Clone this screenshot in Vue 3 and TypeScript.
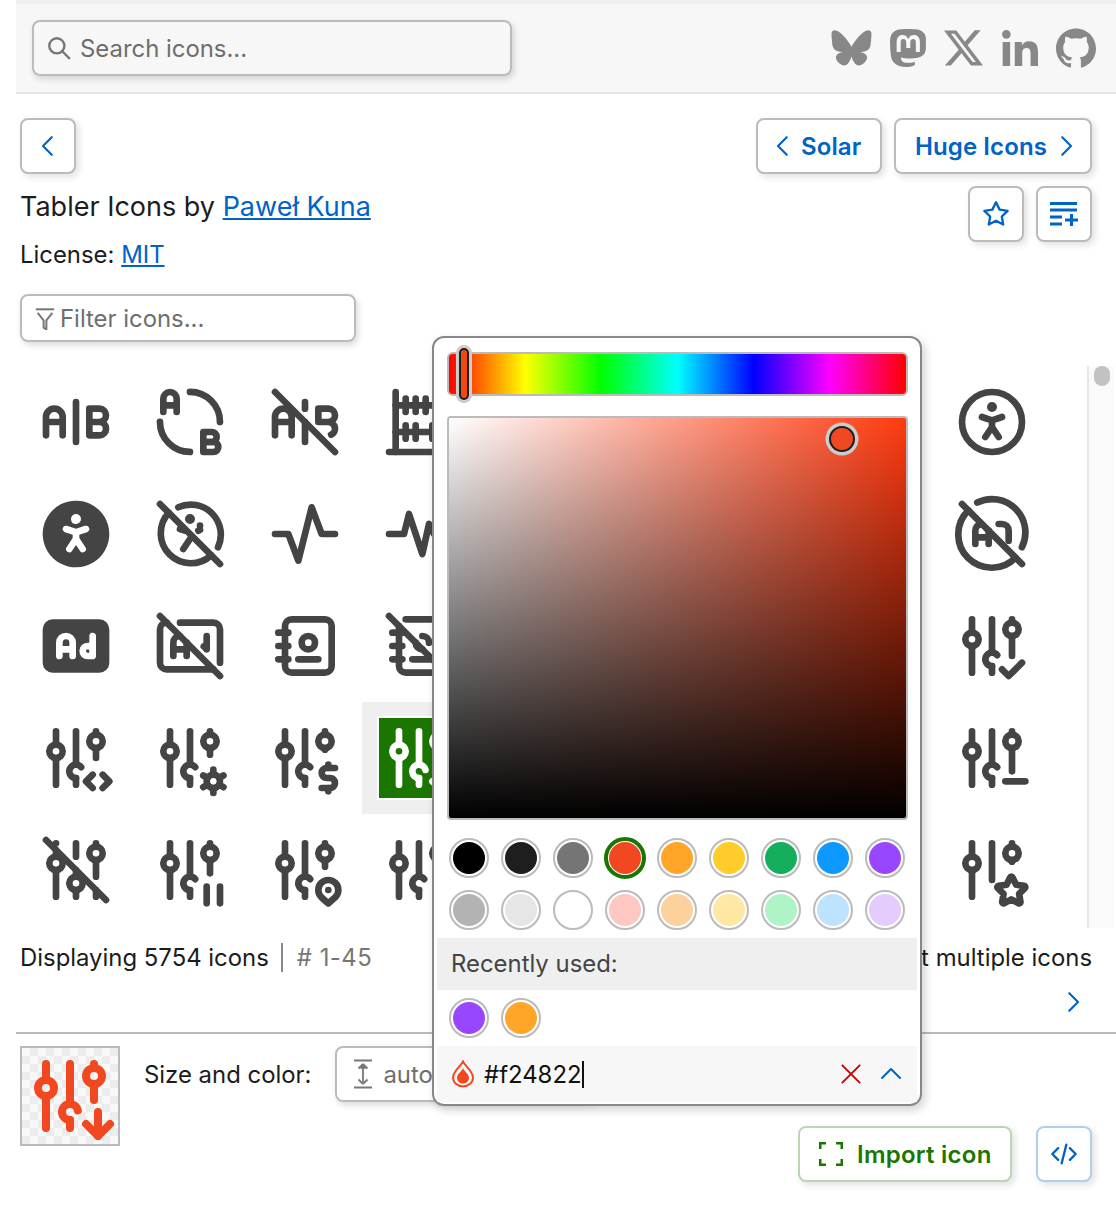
<template>
  <div class="page">
    <div class="top-strip"></div>
    <header class="header">
      <div class="search">
        <svg class="search-icon" viewBox="0 0 24 24"><circle cx="10" cy="10" r="7" /><path d="M15 15l7 7" /></svg>
        <span>Search icons...</span>
      </div>
      <div class="social">
        <svg class="s-bluesky" viewBox="2 2 20 19"><path d="M6.335 3.836C8.625 5.556 11.088 9.043 12 10.87c.912-1.827 3.375-5.314 5.665-7.034 1.652-1.24 4.335-2.2 4.335.854 0 .61-.35 5.12-.555 5.85-.714 2.54-3.314 3.188-5.626 2.796 4.041.688 5.069 2.966 2.849 5.245-4.217 4.327-6.06-1.086-6.533-2.473-.087-.254-.127-.373-.135-.272-.008-.101-.048.018-.135.272-.473 1.387-2.316 6.8-6.533 2.473-2.22-2.279-1.192-4.557 2.849-5.245-2.312.392-4.912-.256-5.626-2.796C2.35 9.81 2 5.3 2 4.69c0-3.054 2.683-2.094 4.335-.854z" /></svg>
        <svg class="s-mastodon" viewBox="0 0 24 24"><path d="M23.268 5.313c-.35-2.578-2.617-4.61-5.304-5.004C17.51.242 15.792 0 11.813 0h-.03c-3.98 0-4.835.242-5.288.309C3.882.692 1.496 2.518.917 5.127.64 6.412.61 7.837.661 9.143c.074 1.874.088 3.745.26 5.611.118 1.24.325 2.47.62 3.68.55 2.237 2.777 4.098 4.96 4.857 2.336.792 4.849.923 7.256.38.265-.061.527-.132.786-.213.585-.184 1.27-.39 1.774-.753a.057.057 0 0 0 .023-.043v-1.809a.052.052 0 0 0-.02-.041.053.053 0 0 0-.046-.01 20.282 20.282 0 0 1-4.709.545c-2.73 0-3.463-1.284-3.674-1.818a5.593 5.593 0 0 1-.319-1.433.053.053 0 0 1 .066-.054c1.517.363 3.072.546 4.632.546.376 0 .75 0 1.125-.01 1.57-.044 3.224-.124 4.768-.422.038-.008.077-.015.11-.024 2.435-.464 4.753-1.92 4.989-5.604.008-.145.03-1.52.03-1.67.002-.512.167-3.63-.024-5.545zm-3.748 9.195h-2.561V8.29c0-1.309-.55-1.976-1.67-1.976-1.23 0-1.846.79-1.846 2.35v3.403h-2.546V8.663c0-1.56-.617-2.35-1.848-2.35-1.112 0-1.668.668-1.67 1.977v6.218H4.822V8.102c0-1.31.337-2.35 1.011-3.12.696-.77 1.608-1.164 2.74-1.164 1.311 0 2.302.5 2.962 1.498l.638 1.06.638-1.06c.66-.999 1.65-1.498 2.96-1.498 1.13 0 2.043.395 2.74 1.164.675.77 1.012 1.81 1.012 3.12z" /></svg>
        <svg class="s-x" viewBox="0 1 24 22"><path d="M18.901 1.153h3.68l-8.04 9.19L24 22.846h-7.406l-5.8-7.584-6.638 7.584H.474l8.6-9.83L0 1.154h7.594l5.243 6.932ZM17.61 20.644h2.039L6.486 3.24H4.298Z" /></svg>
        <svg class="s-in" viewBox="3.2 3.3 17.3 17.2"><path d="M20.447 20.452h-3.554v-5.569c0-1.328-.027-3.037-1.852-3.037-1.853 0-2.136 1.445-2.136 2.939v5.667H9.351V9h3.414v1.561h.046c.477-.9 1.637-1.85 3.37-1.85 3.601 0 4.267 2.37 4.267 5.455v6.286zM5.337 7.433a2.062 2.062 0 0 1-2.063-2.065 2.064 2.064 0 1 1 2.063 2.065zm1.782 13.019H3.555V9h3.564v11.452z" /></svg>
        <svg class="s-github" viewBox="0 0 24 24"><path d="M12 .297c-6.63 0-12 5.373-12 12 0 5.303 3.438 9.8 8.205 11.385.6.113.82-.258.82-.577 0-.285-.01-1.04-.015-2.04-3.338.724-4.042-1.61-4.042-1.61C4.422 18.07 3.633 17.7 3.633 17.7c-1.087-.744.084-.729.084-.729 1.205.084 1.838 1.236 1.838 1.236 1.07 1.835 2.809 1.305 3.495.998.108-.776.417-1.305.76-1.605-2.665-.3-5.466-1.332-5.466-5.93 0-1.31.465-2.38 1.235-3.22-.135-.303-.54-1.523.105-3.176 0 0 1.005-.322 3.3 1.23.96-.267 1.98-.399 3-.405 1.02.006 2.04.138 3 .405 2.28-1.552 3.285-1.23 3.285-1.23.645 1.653.24 2.873.12 3.176.765.84 1.23 1.91 1.23 3.22 0 4.61-2.805 5.625-5.475 5.92.42.36.81 1.096.81 2.22 0 1.606-.015 2.896-.015 3.286 0 .315.21.69.825.57C20.565 22.092 24 17.592 24 12.297c0-6.627-5.373-12-12-12" /></svg>
      </div>
    </header>

    <main class="main">
      <div class="nav-row">
        <button class="btn square"><svg class="stroke-icon chev" viewBox="0 0 24 24"><path d="M15 5l-7 7l7 7" /></svg></button>
        <div class="nav-right">
          <button class="btn labeled solar"><svg class="stroke-icon chev" viewBox="0 0 24 24"><path d="M15 5l-7 7l7 7" /></svg>Solar</button>
          <button class="btn labeled huge">Huge Icons<svg class="stroke-icon chev" viewBox="0 0 24 24"><path d="M9 5l7 7l-7 7" /></svg></button>
        </div>
      </div>

      <div class="info-row">
        <div class="info">
          <h1 class="title">Tabler Icons by <a href="#">Paweł Kuna</a></h1>
          <p class="license">License: <a href="#">MIT</a></p>
        </div>
        <div class="info-actions">
          <button class="btn square"><svg class="stroke-icon star" viewBox="0 0 24 24"><path d="M12 17.75l-6.172 3.245l1.179 -6.873l-5 -4.867l6.9 -1l3.086 -6.253l3.086 6.253l6.9 1l-5 4.867l1.179 6.873z" /></svg></button>
          <button class="btn square"><svg class="stroke-icon list" viewBox="0 0 28 24"><path d="M0 1.500h27M0 8h27M0 15h12M0 22h12M15 18h13M21.500 12v12" /></svg></button>
        </div>
      </div>

      <div class="filter">
        <svg class="filter-icon" viewBox="0 0 24 24"><path d="M2 2.500h20" /><path d="M4 6.500l6.500 8v8l3 2v-10l6.500-8" /></svg>
        <span>Filter icons...</span>
      </div>

      <div class="list-wrap">
        <div class="icon-grid">
          <div v-for="(name, i) in grid" :key="i" class="cell" :class="{ selected: name === 'down' }">
            <span class="tile">
              <svg class="tabler" :class="{ solid: icons[name].solid }" viewBox="0 0 24 24">
                <path v-for="d in icons[name].d" :key="d" :d="d" />
              </svg>
            </span>
          </div>
        </div>
        <div class="scrollbar"><span class="thumb"></span></div>
      </div>

      <div class="status-row">
        <div class="count"><span>Displaying 5754 icons</span><span class="range"># 1-45</span></div>
        <span>Select multiple icons</span>
      </div>
      <div class="pager"><svg class="stroke-icon chev" viewBox="0 0 24 24"><path d="M9 5l7 7l-7 7" /></svg></div>
    </main>

    <footer class="footer">
      <div class="preview">
        <svg class="tabler preview-icon" viewBox="0 0 24 24">
          <path v-for="d in icons.down.d" :key="d" :d="d" />
        </svg>
      </div>
      <div class="footer-body">
        <div class="size-row">
          <span class="size-label">Size and color:</span>
          <div class="size-input">
            <svg class="height-icon" viewBox="0 0 18 30"><path d="M0 1.500h18M0 28.500h18" /><path d="M9 5l-4.500 4.500M9 5l4.500 4.500M6.500 9.500l2.500-2.500l2.500 2.500M9 7v16M9 25l-4.500-4.500M9 25l4.500-4.500" /></svg>
            <span>auto</span>
          </div>
        </div>
        <div class="footer-actions">
          <button class="btn labeled import">
            <svg class="import-icon" viewBox="0 0 24 24"><path d="M1 7v-6h6M17 1h6v6M23 17v6h-6M7 23h-6v-6" /></svg>
            Import icon
          </button>
          <button class="btn square code">
            <svg class="stroke-icon code-icon" viewBox="0 0 24 24"><path d="M7 7l-5 5l5 5M17 7l5 5l-5 5M14 4l-4 16" /></svg>
          </button>
        </div>
      </div>
    </footer>

    <div class="picker">
      <div class="hue-bar"><span class="hue-thumb"></span></div>
      <div class="sat-box"><span class="sat-thumb"></span></div>
      <div class="swatches">
        <span v-for="c in swatches" :key="c" class="swatch" :class="{ active: c === current }" :style="{ backgroundColor: c }"></span>
      </div>
      <div class="recent-head">Recently used:</div>
      <div class="swatches recent">
        <span v-for="c in recent" :key="c" class="swatch" :style="{ backgroundColor: c }"></span>
      </div>
      <div class="color-row">
        <svg class="drop" viewBox="0 0 24 28">
          <path class="drop-line" d="M12 1.500c1.500 4 10 9.500 10 16a10 9 0 0 1-20 0c0-6.500 8.500-12 10-16z" />
          <path class="drop-fill" d="M12 8c1 3 6 6 6 10a6 5.500 0 0 1-12 0c0-4 5-7 6-10z" />
        </svg>
        <span class="hex">{{ current }}<i class="caret"></i></span>
        <svg class="clear" viewBox="0 0 24 24"><path d="M2 2l20 20M22 2l-20 20" /></svg>
        <svg class="stroke-icon collapse" viewBox="0 0 24 24"><path d="M3 16l9-9l9 9" /></svg>
      </div>
    </div>
  </div>
</template>

<script setup lang="ts">
interface IconDef {
  d: string[];
  solid?: boolean;
}

const knobA = 'M4 10a2 2 0 1 0 4 0a2 2 0 0 0 -4 0';
const knobC = 'M16 7a2 2 0 1 0 4 0a2 2 0 0 0 -4 0';
const hook = 'M13.557 14.745a2 2 0 1 0 -1.557 3.255';
const sliders = [knobA, 'M6 4v4', 'M6 12v8', hook, 'M12 4v10', 'M12 18v2', knobC, 'M18 4v1'];

const icons: Record<string, IconDef> = {
  ab: { d: ['M3 16v-5.500a2.500 2.500 0 0 1 5 0v5.500m0 -4h-5', 'M12 6l0 12', 'M16 16v-8h3a2 2 0 0 1 0 4h-3m3 0a2 2 0 0 1 0 4h-3'] },
  ab2: { d: ['M16 21h3c.81 0 1.48 -.67 1.48 -1.48l.02 -.02c0 -.82 -.69 -1.500 -1.500 -1.500h-3v3z', 'M16 15h2.500c.84 -.01 1.500 .66 1.500 1.500s-.66 1.500 -1.500 1.500h-2.500v-3z', 'M4 9v-4c0 -1.036 .895 -2 2 -2s2 .964 2 2v4', 'M2.990 11.980a9 9 0 0 0 9 9m9 -9a9 9 0 0 0 -9 -9', 'M8 7h-4'] },
  aboff: { d: ['M3 16v-5.500a2.500 2.500 0 0 1 5 0v5.500m0 -4h-5', 'M12 12v6', 'M12 6v2', 'M16 8h3a2 2 0 1 1 0 4h-3m3 0a2 2 0 0 1 .83 3.820m-3.830 -3.820v-4', 'M3 3l18 18'] },
  abacus: { d: ['M5 3v18', 'M19 21v-18', 'M5 7h14', 'M5 15h14', 'M8 13v4', 'M11 13v4', 'M16 13v4', 'M14 5v4', 'M11 5v4', 'M8 5v4', 'M3 21h18'] },
  accessible: { d: ['M12 12m-9 0a9 9 0 1 0 18 0a9 9 0 1 0 -18 0', 'M10 16.500l2 -3l2 3m-2 -3v-2l3 -1m-6 0l3 1', 'M12 7.500m-.5 0a.5 .5 0 1 0 1 0a.5 .5 0 1 0 -1 0'] },
  accessibleFilled: { solid: true, d: ['M17 3.340a10 10 0 1 1 -14.995 8.984l-.005 -.324l.005 -.324a10 10 0 0 1 14.995 -8.336zm-1.051 6.844a1 1 0 0 0 -1.152 -.663l-.113 .03l-2.684 .895l-2.684 -.895l-.113 -.03a1 1 0 0 0 -.628 1.884l.109 .044l2.316 .771v.976l-1.832 2.750l-.06 .1a1 1 0 0 0 .237 1.210l.1 .076l.101 .06a1 1 0 0 0 1.210 -.237l.076 -.1l1.168 -1.752l1.168 1.752l.07 .093a1 1 0 0 0 1.653 -1.102l-.059 -.1l-1.832 -2.750v-.977l2.316 -.771l.109 -.044a1 1 0 0 0 .524 -1.221zm-3.949 -4.184a1.500 1.500 0 0 0 -1.500 1.500l.007 .144a1.500 1.500 0 0 0 1.493 1.356a1.500 1.500 0 0 0 0 -3z'] },
  accessibleOff: { d: ['M10 16.500l2 -3l.5 -.75', 'M9 10.500l1.500 .5', 'M14.500 11l.5 -.25', 'M12 7.500m-.5 0a.5 .5 0 1 0 1 0a.5 .5 0 1 0 -1 0', 'M15 9.500h.01', 'M8.500 4a9 9 0 0 1 11.900 12', 'M18.360 18.360a9 9 0 0 1 -12.720 -12.720', 'M3 3l18 18'] },
  activity: { d: ['M3 12h4l3 8l4 -16l3 8h4'] },
  heartbeat: { d: ['M3 12h4.500l1.500 -6l4 12l2 -9l1.500 3h4.500'] },
  adFilled: { solid: true, d: ['M19 4h-14a3 3 0 0 0 -3 3v10a3 3 0 0 0 3 3h14a3 3 0 0 0 3 -3v-10a3 3 0 0 0 -3 -3zm-10 4a3 3 0 0 1 2.995 2.824l.005 .176v4a1 1 0 0 1 -1.993 .117l-.007 -.117v-1h-2v1a1 1 0 0 1 -1.993 .117l-.007 -.117v-4a3 3 0 0 1 3 -3zm0 2a1 1 0 0 0 -.993 .883l-.007 .117v1h2v-1a1 1 0 0 0 -1 -1zm8 -2a1 1 0 0 1 .993 .883l.007 .117v6a1 1 0 0 1 -.883 .993l-.117 .007h-1.500a2.500 2.500 0 1 1 .326 -4.979l.174 .029v-2.050a1 1 0 0 1 .883 -.993l.117 -.007zm-1.410 5.008l-.09 -.008a.5 .5 0 0 0 -.09 .992l.09 .008h.5v-.5a.5 .5 0 0 0 -.41 -.492z'] },
  adOff: { d: ['M9 5h10a2 2 0 0 1 2 2v10m-2 2h-14a2 2 0 0 1 -2 -2v-10a2 2 0 0 1 2 -2', 'M7 15v-4a2 2 0 0 1 2 -2m2 2v4', 'M7 13h4', 'M17 9v4', 'M16.115 12.131c.33 .149 .595 .412 .747 .74', 'M3 3l18 18'] },
  adCircleOff: { d: ['M4.930 4.930a10 10 0 1 0 14.140 14.140m1.900 -3.100a10 10 0 0 0 -13.400 -13.400', 'M7 15v-4a2 2 0 0 1 1.600 -1.960', 'M7 13h4', 'M11 11v4', 'M14 9h1a2 2 0 0 1 2 2v3', 'M3 3l18 18'] },
  book: { d: ['M20 6v12a2 2 0 0 1 -2 2h-10a2 2 0 0 1 -2 -2v-12a2 2 0 0 1 2 -2h10a2 2 0 0 1 2 2z', 'M10 16h6', 'M13 11m-2 0a2 2 0 1 0 4 0a2 2 0 1 0 -4 0', 'M4 8h3', 'M4 12h3', 'M4 16h3'] },
  bookOff: { d: ['M8 4h10a2 2 0 0 1 2 2v10m-.57 3.399c-.363 .37 -.87 .601 -1.430 .601h-10a2 2 0 0 1 -2 -2v-12', 'M10 16h6', 'M11 11a2 2 0 0 0 2 2m2 -2a2 2 0 0 0 -2 -2', 'M4 8h3', 'M4 12h3', 'M4 16h3', 'M3 3l18 18'] },
  check: { d: [...sliders, 'M18 9v6', 'M15 19l2 2l4 -4'] },
  code: { d: [...sliders, 'M18 9v3', 'M20 21l2 -2l-2 -2', 'M17 17l-2 2l2 2'] },
  cog: { d: [...sliders, 'M18 9v2', 'M19.001 19m-2 0a2 2 0 1 0 4 0a2 2 0 1 0 -4 0', 'M19.001 15.500v1.500', 'M19.001 21v1.500', 'M22.032 17.250l-1.299 .75', 'M17.270 20l-1.300 .75', 'M15.970 17.250l1.300 .75', 'M20.733 20l1.300 .75'] },
  dollar: { d: [...sliders, 'M18 9v.5', 'M21 15h-2.500a1.500 1.500 0 0 0 0 3h1a1.500 1.500 0 0 1 0 3h-2.500', 'M19 21v1m0 -8v1'] },
  down: { d: [knobA, 'M6 4v4', 'M6 12v8', 'M13.958 15.592a2 2 0 1 0 -1.958 2.408', 'M12 4v10', 'M12 18v2', knobC, 'M18 4v1', 'M18 9v4', 'M19 16v6', 'M22 19l-3 3l-3 -3'] },
  minus: { d: [...sliders, 'M18 9v7', 'M16 19h6'] },
  off: { d: [knobA, 'M6 6v2', 'M6 4v.01', 'M6 12v8', 'M10 16a2 2 0 1 0 4 0a2 2 0 0 0 -4 0', 'M12 4v4m0 4v2', 'M12 18v2', knobC, 'M18 4v1', 'M18 9v5m0 4v2', 'M3 3l18 18'] },
  pause: { d: [...sliders, 'M18 9v4', 'M17 17v5', 'M21 17v5'] },
  pin: { d: [...sliders, 'M18 9v2', 'M21.121 20.121a3 3 0 1 0 -4.242 0c.418 .419 1.125 1.045 2.121 1.879c1.051 -.89 1.759 -1.516 2.121 -1.879z', 'M19 18v.01'] },
  plain: { d: [...sliders, 'M18 9v11'] },
  star: { d: [knobA, 'M6 4v4', 'M6 12v8', 'M12 4v11', knobC, 'M18 4v1', 'M18 9v.5', 'M17.800 20.817l-2.172 1.138a.392 .392 0 0 1 -.568 -.41l.415 -2.411l-1.757 -1.707a.389 .389 0 0 1 .217 -.665l2.428 -.352l1.086 -2.193a.392 .392 0 0 1 .702 0l1.086 2.193l2.428 .352a.39 .39 0 0 1 .217 .665l-1.757 1.707l.414 2.410a.39 .39 0 0 1 -.567 .411l-2.172 -1.138z'] },
};

// cols 5-8 sit behind the colour picker
const grid: string[] = [
  'ab', 'ab2', 'aboff', 'abacus', 'plain', 'plain', 'plain', 'plain', 'accessible',
  'accessibleFilled', 'accessibleOff', 'activity', 'heartbeat', 'plain', 'plain', 'plain', 'plain', 'adCircleOff',
  'adFilled', 'adOff', 'book', 'bookOff', 'plain', 'plain', 'plain', 'plain', 'check',
  'code', 'cog', 'dollar', 'down', 'plain', 'plain', 'plain', 'plain', 'minus',
  'off', 'pause', 'pin', 'plain', 'plain', 'plain', 'plain', 'plain', 'star',
];

const current = '#f24822';
const swatches = [
  '#000000', '#1e1e1e', '#757575', '#f24822', '#ffa629', '#ffcd29', '#14ae5c', '#0d99ff', '#9747ff',
  '#b3b3b3', '#e6e6e6', '#ffffff', '#ffc7c2', '#fcd19c', '#ffe8a3', '#aff4c6', '#bde3ff', '#e4ccff',
];
const recent = ['#9747ff', '#ffa629'];
</script>

<style>
html,
body {
  margin: 0;
  background: #fff;
}
</style>

<style scoped>
.page {
  position: relative;
  width: 1116px;
  height: 1206px;
  overflow: hidden;
  padding-left: 16px;
  box-sizing: border-box;
  font-family: Inter, "Liberation Sans", sans-serif;
  font-size: 23.9px;
  color: #1c1c1c;
  background: #fff;
}

.top-strip {
  height: 4px;
  background: #eff0f2;
}

.header {
  display: flex;
  align-items: center;
  justify-content: space-between;
  height: 88px;
  padding: 0 20px 0 16px;
  background: #f7f7f7;
  border-bottom: 2px solid #e5e5e5;
}

.search {
  display: flex;
  align-items: center;
  gap: 8px;
  width: 480px;
  height: 56px;
  padding-left: 12px;
  box-sizing: border-box;
  border: 2px solid #bbb;
  border-radius: 8px;
  box-shadow: 2px 3px 6px rgba(0, 0, 0, 0.15);
  color: #6e6e6e;
}

.search-icon {
  width: 26px;
  height: 26px;
  fill: none;
  stroke: #777;
  stroke-width: 2.200;
}

.social {
  display: flex;
  align-items: center;
  gap: 17px;
  fill: #888;
}

.s-bluesky {
  width: 41px;
  height: 38px;
}

.s-mastodon {
  width: 38px;
  height: 40px;
}

.s-x {
  width: 39px;
  height: 36px;
}

.s-in {
  width: 40px;
  height: 36px;
}

.s-github {
  width: 40px;
  height: 40px;
  margin-left: -1px;
}

.main {
  padding: 24px 24px 0 4px;
}

.nav-row {
  display: flex;
  justify-content: space-between;
}

.nav-right {
  display: flex;
  gap: 12px;
}

.btn {
  display: inline-flex;
  align-items: center;
  justify-content: center;
  height: 56px;
  box-sizing: border-box;
  border: 2px solid #bbb;
  border-radius: 8px;
  background: #fff;
  box-shadow: 3px 3px 7px rgba(0, 0, 0, 0.12);
  font-family: inherit;
  font-size: 24px;
  font-weight: 600;
  letter-spacing: 0.1px;
  color: #0063c7;
  padding: 0;
}

.square {
  width: 56px;
}

.stroke-icon {
  fill: none;
  stroke: #0063c7;
  stroke-width: 2;
  stroke-linecap: round;
  stroke-linejoin: round;
}

.chev {
  width: 30px;
  height: 30px;
  stroke-width: 1.700;
}

.labeled {
  justify-content: flex-start;
}

.solar {
  width: 126px;
  gap: 3px;
  padding-left: 10px;
}

.huge {
  width: 198px;
  gap: 4px;
  padding-left: 19px;
}

.info-row {
  display: flex;
  justify-content: space-between;
  margin-top: 12px;
}

.info-actions {
  display: flex;
  gap: 12px;
}

.star {
  width: 28px;
  height: 28px;
}

.list {
  width: 28px;
  height: 24px;
  stroke-linecap: butt;
  stroke-width: 3;
}

.title {
  margin: 1px 0 0;
  font-size: 27px;
  font-weight: 400;
  line-height: 40px;
}

.title a,
.license a {
  color: #0063c7;
}

.license {
  margin: 8px 0 0;
  line-height: 40px;
}

.filter {
  display: flex;
  align-items: center;
  gap: 4px;
  width: 336px;
  height: 48px;
  margin-top: 19px;
  padding-left: 12px;
  box-sizing: border-box;
  border: 2px solid #bbb;
  border-radius: 8px;
  box-shadow: 2px 3px 6px rgba(0, 0, 0, 0.15);
  color: #6e6e6e;
}

.filter-icon {
  width: 22px;
  height: 24px;
  fill: none;
  stroke: #777;
  stroke-width: 2.200;
}

.list-wrap {
  display: flex;
  justify-content: space-between;
  margin: 24px -22px 0 0;
}

.icon-grid {
  display: grid;
  grid-template-columns: repeat(9, 114.5px);
  grid-auto-rows: 112px;
  margin-left: -1.500px;
}

.cell {
  display: flex;
  align-items: center;
  justify-content: center;
}

.cell.selected {
  background: #efefef;
}

.tile {
  display: block;
  width: 80px;
  height: 80px;
}

.cell.selected .tile {
  background: #1b7600;
  outline: 2px solid #fff;
}

.tabler {
  display: block;
  width: 100%;
  height: 100%;
  fill: none;
  stroke: #444;
  stroke-width: 2;
  stroke-linecap: round;
  stroke-linejoin: round;
}

.tabler.solid {
  fill: #444;
  stroke: none;
}

.cell.selected .tabler {
  stroke: #fff;
}

.scrollbar {
  width: 27px;
  height: 562px;
  box-sizing: border-box;
  padding: 0 5px;
  background: #fafafa;
  border-left: 2px solid #e8e8e8;
}

.thumb {
  display: block;
  width: 16px;
  height: 20px;
  border-radius: 8px;
  background: #c2c2c2;
}

.status-row {
  display: flex;
  justify-content: space-between;
  align-items: center;
  height: 30px;
  margin-top: 14px;
}

.count {
  display: flex;
  align-items: center;
}

.range {
  margin-left: 12px;
  padding-left: 14px;
  border-left: 2px solid #888;
  color: #777;
  letter-spacing: 0.5px;
}

.pager {
  display: flex;
  justify-content: flex-end;
  margin-top: 15px;
  padding-right: 4px;
}

.footer {
  display: flex;
  margin-top: 15px;
  padding: 12px 24px 0 4px;
  border-top: 2px solid #bbb;
}

.preview {
  flex: none;
  width: 100px;
  height: 100px;
  box-sizing: border-box;
  border: 2px solid #bbb;
  background: repeating-conic-gradient(#ececec 0 25%, #f8f8f8 0 50%) 0 0 / 16px 16px;
}

.preview-icon {
  stroke: #f24822;
}

.footer-body {
  flex: 1;
  margin-left: 24px;
}

.size-row {
  display: flex;
  align-items: center;
  gap: 24px;
}

.size-input {
  display: flex;
  align-items: center;
  gap: 11px;
  width: 260px;
  height: 56px;
  padding-left: 17px;
  box-sizing: border-box;
  border: 2px solid #bbb;
  border-radius: 8px;
  box-shadow: 2px 3px 6px rgba(0, 0, 0, 0.15);
  color: #6e6e6e;
}

.height-icon {
  width: 18px;
  height: 30px;
  fill: none;
  stroke: #777;
  stroke-width: 1.800;
}

.footer-actions {
  display: flex;
  justify-content: flex-end;
  gap: 24px;
  margin-top: 24px;
}

.import {
  width: 214px;
  gap: 14px;
  padding-left: 19px;
  letter-spacing: 0.25px;
  border-color: #bad6b2;
  color: #1b7600;
}

.import-icon {
  width: 24px;
  height: 24px;
  fill: none;
  stroke: #1b7600;
  stroke-width: 3;
}

.code {
  border-color: #aecff0;
}

.code-icon {
  width: 32px;
  height: 28px;
}

.picker {
  position: absolute;
  left: 432px;
  top: 336px;
  width: 490px;
  height: 770px;
  box-sizing: border-box;
  padding: 0 3px 2px;
  display: flex;
  flex-direction: column;
  background: #fff;
  border: 2px solid #888;
  border-radius: 12px;
  box-shadow: 3px 4px 10px rgba(0, 0, 0, 0.18);
}

.hue-bar {
  position: relative;
  height: 44px;
  margin: 14px 9px 0 10px;
  box-sizing: border-box;
  border: 2px solid #bbb;
  border-radius: 6px;
  background: linear-gradient(to right, #f00 0%, #ff0 16.66%, #0f0 33.33%, #0ff 50%, #00f 66.66%, #f0f 83.33%, #f00 100%);
}

.hue-thumb {
  position: absolute;
  left: 10px;
  top: -6px;
  width: 10px;
  height: 52px;
  box-sizing: border-box;
  background: #f5480f;
  border: 2px solid #1e1e1e;
  border-radius: 5px;
  box-shadow: 0 0 0 3px #ccc;
}

.sat-box {
  position: relative;
  height: 404px;
  margin: 20px 9px 0 10px;
  box-sizing: border-box;
  border: 2px solid #bbb;
  border-radius: 4px;
  background: linear-gradient(to top, #000, rgba(0, 0, 0, 0)), linear-gradient(to right, #fff, #ff3a10);
}

.sat-thumb {
  position: absolute;
  left: 380px;
  top: 8px;
  width: 26px;
  height: 26px;
  box-sizing: border-box;
  background: #f24822;
  border: 2px solid #1e1e1e;
  border-radius: 50%;
  box-shadow: 0 0 0 3.500px #ccc;
}

.swatches {
  display: grid;
  grid-template-columns: repeat(9, 40px);
  gap: 12px;
  margin: 18px 0 0 12px;
}

.swatch {
  width: 40px;
  height: 40px;
  box-sizing: border-box;
  padding: 2px;
  border: 2px solid #bbb;
  border-radius: 50%;
  background-clip: content-box;
}

.swatch.active {
  outline: 4.500px solid #1b7600;
  outline-offset: -3px;
  border-color: #fff;
}

.recent-head {
  height: 52px;
  margin-top: 8px;
  padding-left: 14px;
  line-height: 52px;
  background: #efefef;
  color: #444;
}

.recent {
  margin-top: 8px;
  margin-bottom: 8px;
}

.color-row {
  display: flex;
  align-items: center;
  height: 56px;
  padding: 0 14px;
  background: #f7f7f7;
}

.drop {
  width: 24px;
  height: 28px;
}

.drop-line {
  fill: none;
  stroke: #f24822;
  stroke-width: 2;
}

.drop-fill {
  fill: #f24822;
}

.hex {
  flex: 1;
  margin-left: 9px;
  color: #111;
}

.caret {
  display: inline-block;
  width: 2px;
  height: 27px;
  vertical-align: -5px;
  background: #111;
}

.clear {
  width: 22px;
  height: 22px;
  fill: none;
  stroke: #c80000;
  stroke-width: 2;
}

.collapse {
  width: 24px;
  height: 24px;
  margin-left: 17px;
}
</style>
